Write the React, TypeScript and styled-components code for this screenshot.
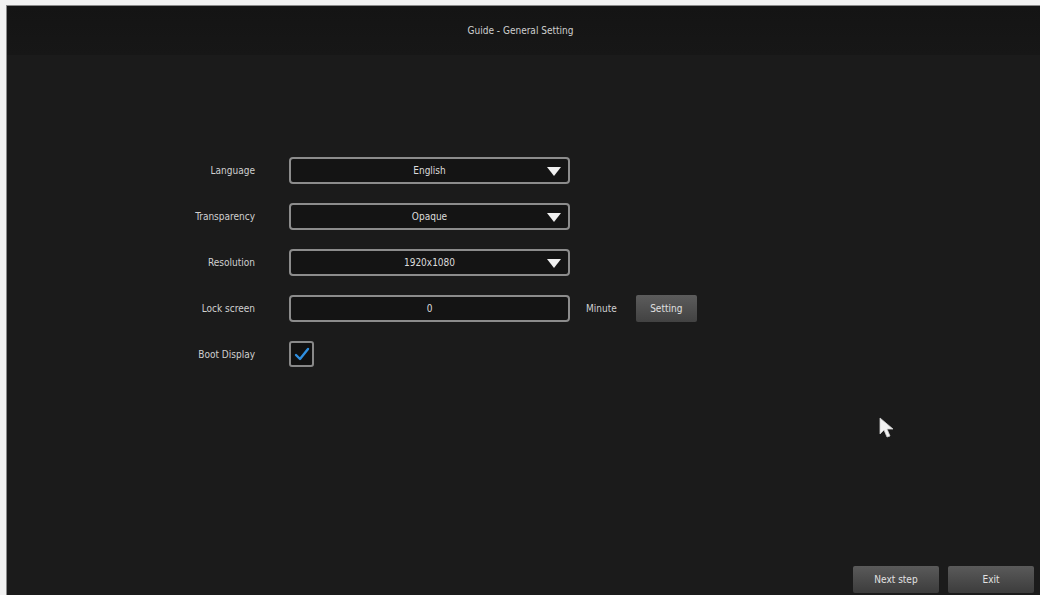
import * as React from 'react';
import styled, { createGlobalStyle } from 'styled-components';

const GlobalStyle = createGlobalStyle`
  html, body {
    margin: 0;
    padding: 0;
    background: #f2f2f2;
  }
  body {
    font-family: "Liberation Sans Narrow", "DejaVu Sans Condensed", "Liberation Sans", sans-serif;
  }
`;

const Frame = styled.div`
  width: 1040px;
  height: 595px;
  box-sizing: border-box;
  padding: 5px 0 0 6px;
  background: #f2f2f2;
  overflow: hidden;
`;

const Screen = styled.div`
  position: relative;
  height: 100%;
  display: flex;
  flex-direction: column;
  background: #1b1b1b;
  border-top: 1px solid #8a8a8a;
  border-left: 1px solid #8a8a8a;
  color: #d8d8d8;
`;

const Header = styled.div`
  height: 49px;
  flex: 0 0 auto;
  display: flex;
  align-items: center;
  justify-content: center;
  background: linear-gradient(#141414, #171717);
  font-size: 10px;
  color: #cfcfcf;
  padding-right: 6px;
`;

const Body = styled.div`
  flex: 1;
  padding: 102px 0 0 148px;
`;

const Form = styled.div`
  display: grid;
  grid-template-columns: 100px auto;
  column-gap: 34px;
  row-gap: 19px;
  align-items: center;
`;

const Label = styled.div`
  text-align: right;
  font-size: 10px;
  color: #d0d0d0;
`;

const Line = styled.div`
  display: flex;
  align-items: center;
`;

const Field = styled.div`
  position: relative;
  width: 281px;
  height: 27px;
  box-sizing: border-box;
  border: 2px solid #8c8c8c;
  border-radius: 4px;
  background: #141414;
  display: flex;
  align-items: center;
  justify-content: center;
  font-size: 10px;
  color: #dcdcdc;
`;

const Arrow = styled.span`
  position: absolute;
  right: 7px;
  top: 8px;
  width: 0;
  height: 0;
  border-left: 7px solid transparent;
  border-right: 7px solid transparent;
  border-top: 9px solid #f0f0f0;
`;

const Unit = styled.span`
  font-size: 10px;
  margin-left: 16px;
  color: #d0d0d0;
`;

const SmallButton = styled.div`
  margin-left: 19px;
  width: 61px;
  height: 27px;
  border-radius: 2px;
  background: linear-gradient(#5c5c5c, #424242);
  display: flex;
  align-items: center;
  justify-content: center;
  font-size: 10px;
  color: #e0e0e0;
`;

const Check = styled.div`
  width: 25px;
  height: 26px;
  box-sizing: border-box;
  border: 2px solid #888;
  border-radius: 3px;
  background: #111;
  display: flex;
  align-items: center;
  justify-content: center;
`;

const Footer = styled.div`
  display: flex;
  justify-content: flex-end;
  gap: 9px;
  padding: 0 6px 3px 0;
`;

const FootButton = styled.div`
  width: 86px;
  height: 27px;
  border-radius: 2px;
  background: linear-gradient(#5a5a5a, #3c3c3c);
  display: flex;
  align-items: center;
  justify-content: center;
  font-size: 10px;
  color: #e2e2e2;
`;

const Cursor = styled.svg`
  position: absolute;
  left: 872px;
  top: 411px;
`;

const rows = [
  { label: 'Language', value: 'English' },
  { label: 'Transparency', value: 'Opaque' },
  { label: 'Resolution', value: '1920x1080' },
];

export default function App() {
  return (
    <Frame>
      <GlobalStyle />
      <Screen>
        <Header>Guide - General Setting</Header>
        <Body>
          <Form>
            {rows.map(r => (
              <React.Fragment key={r.label}>
                <Label>{r.label}</Label>
                <Line>
                  <Field>
                    {r.value}
                    <Arrow />
                  </Field>
                </Line>
              </React.Fragment>
            ))}
            <Label>Lock screen</Label>
            <Line>
              <Field>0</Field>
              <Unit>Minute</Unit>
              <SmallButton>Setting</SmallButton>
            </Line>
            <Label>Boot Display</Label>
            <Line>
              <Check>
                <svg width="16" height="14" viewBox="0 0 16 14">
                  <path d="M2 8 L6 12 L14 2" fill="none" stroke="#2f8fe0" strokeWidth="2.4" strokeLinecap="round" strokeLinejoin="round" />
                </svg>
              </Check>
            </Line>
          </Form>
        </Body>
        <Footer>
          <FootButton>Next step</FootButton>
          <FootButton>Exit</FootButton>
        </Footer>
        <Cursor width="16" height="22" viewBox="0 0 16 22">
          <path d="M1 1 L1 17 L5 13 L8 20 L11 19 L8 12 L14 12 Z" fill="#f2f2f2" stroke="#cfcfcf" strokeWidth="0.8" />
        </Cursor>
      </Screen>
    </Frame>
  );
}
